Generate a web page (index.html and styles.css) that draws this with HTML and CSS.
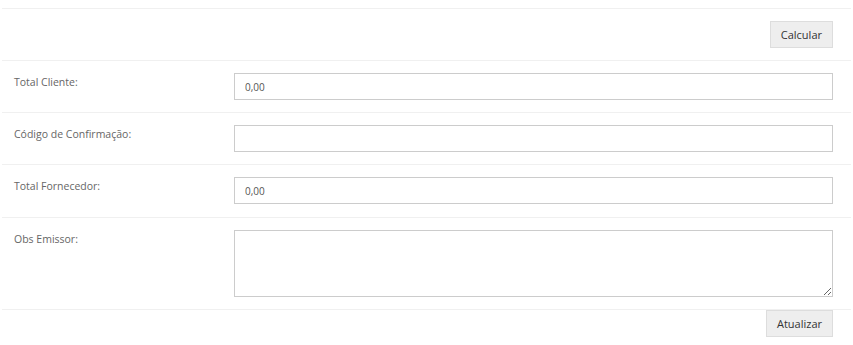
FILE: index.html
```html
<!DOCTYPE html>
<html lang="pt-BR">
<head>
  <meta charset="utf-8" />
  <title>Fechamento</title>
  <link rel="stylesheet" href="styles.css">
</head>
<body>
  <div class="form-wrapper">
    <div class="form-row actions">
      <button type="button" class="btn">Calcular</button>
    </div>

    <div class="form-row">
      <label class="field-label" for="totalCliente">Total Cliente:</label>
      <div class="field">
        <input type="text" id="totalCliente" class="input" value="0,00">
      </div>
    </div>

    <div class="form-row">
      <label class="field-label" for="codigo">Código de Confirmação:</label>
      <div class="field">
        <input type="text" id="codigo" class="input" value="">
      </div>
    </div>

    <div class="form-row tall">
      <label class="field-label" for="totalFornecedor">Total Fornecedor:</label>
      <div class="field">
        <input type="text" id="totalFornecedor" class="input" value="0,00">
      </div>
    </div>

    <div class="form-row">
      <label class="field-label" for="obs">Obs Emissor:</label>
      <div class="field">
        <textarea id="obs" class="input textarea"></textarea>
      </div>
    </div>

    <div class="form-row actions footer">
      <button type="button" class="btn">Atualizar</button>
    </div>
  </div>
</body>
</html>
```

FILE: styles.css
```css
html, body {
  margin: 0;
  padding: 0;
  background: #fff;
  font-family: 'Open Sans', 'Noto Sans', sans-serif;
  font-size: 10px;
  color: #666;
}

.form-wrapper {
  padding: 8px 2px 0 2px;
}

.form-row {
  display: flex;
  align-items: flex-start;
  border-top: 1px solid #f0f0f0;
  padding: 12px 18px 12px 12px;
}

.form-row.tall {
  padding-bottom: 13px;
}

.form-row.actions {
  justify-content: flex-end;
}

.form-row.footer {
  padding-top: 0;
}

.field-label {
  width: 220px;
  flex-shrink: 0;
  font-size: 10.5px;
  line-height: 14px;
  padding-top: 2px;
  color: #666;
}

.field {
  flex: 1;
}

.input {
  display: block;
  box-sizing: border-box;
  width: 100%;
  height: 27px;
  margin: 0;
  padding: 0 10px;
  border: 1px solid #ccc;
  border-radius: 0;
  background: #fff;
  font-family: inherit;
  font-size: 10px;
  color: #555;
  outline: none;
}

.textarea {
  height: 67px;
  resize: vertical;
  padding: 6px 10px;
}

.btn {
  box-sizing: border-box;
  height: 27px;
  padding: 0 10px;
  margin: 0;
  border: 1px solid #ddd;
  border-radius: 0;
  background: #eee;
  font-family: inherit;
  font-size: 11px;
  color: #333;
  cursor: pointer;
}
```
